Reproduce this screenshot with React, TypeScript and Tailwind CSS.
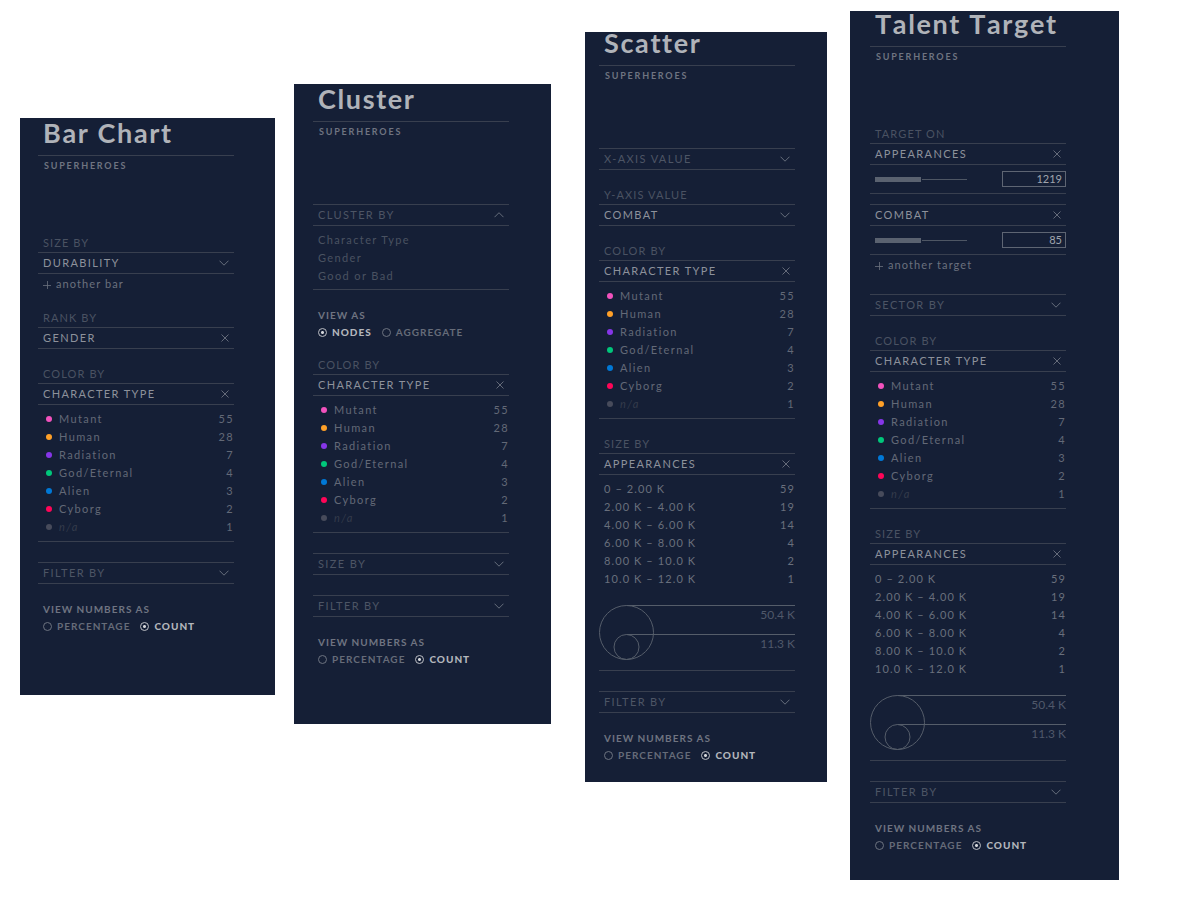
import { useId, useState, type ReactNode } from "react";

const characterTypes = [
  { name: "Mutant", count: 55, dot: "bg-[#f252bd]" },
  { name: "Human", count: 28, dot: "bg-[#ffa028]" },
  { name: "Radiation", count: 7, dot: "bg-[#8636e8]" },
  { name: "God/Eternal", count: 4, dot: "bg-[#00c77b]" },
  { name: "Alien", count: 3, dot: "bg-[#0078d6]" },
  { name: "Cyborg", count: 2, dot: "bg-[#ff0558]" },
  { name: "n/a", count: 1, dot: "bg-[#474b5b]" },
];

const appearanceRanges = [
  { name: "0 – 2.00 K", count: 59 },
  { name: "2.00 K – 4.00 K", count: 19 },
  { name: "4.00 K – 6.00 K", count: 14 },
  { name: "6.00 K – 8.00 K", count: 4 },
  { name: "8.00 K – 10.0 K", count: 2 },
  { name: "10.0 K – 12.0 K", count: 1 },
];

function Chevron({ up = false }: { up?: boolean }) {
  return (
    <svg
      className="pointer-events-none h-[6px] w-[10px] text-[#7b818e]"
      viewBox="0 0 10 6"
      fill="none"
      stroke="currentColor"
      strokeWidth="0.8"
      aria-hidden="true"
    >
      <path d={up ? "M0.5 5.2 5 0.7 9.5 5.2" : "M0.5 0.7 5 5.2 9.5 0.7"} />
    </svg>
  );
}

function Cross() {
  return (
    <svg
      className="size-2 text-[#868b97]"
      viewBox="0 0 8 8"
      fill="none"
      stroke="currentColor"
      strokeWidth="0.7"
      aria-hidden="true"
    >
      <path d="M0.5 0.5 7.5 7.5M7.5 0.5 0.5 7.5" />
    </svg>
  );
}

function Label({ children, htmlFor }: { children: ReactNode; htmlFor?: string }) {
  const style = "block pb-1 pl-[5px] text-[11px] leading-[10px] tracking-widest text-[#4a5262]";
  return htmlFor ? (
    <label htmlFor={htmlFor} className={style}>
      {children}
    </label>
  ) : (
    <h2 className={style}>{children}</h2>
  );
}

function Dropdown({ label, value }: { label: string; value?: string }) {
  const id = useId();
  return (
    <section className="mt-5">
      {value && <Label htmlFor={id}>{label}</Label>}
      <div className="grid h-[22px] items-center border-y border-[#383f4f]">
        <select
          id={id}
          aria-label={value ? undefined : label}
          className={
            value
              ? "col-start-1 row-start-1 h-5 w-full appearance-none bg-transparent pl-[5px] text-[11px] leading-5 tracking-[0.125em] text-[#8d919b] outline-none"
              : "col-start-1 row-start-1 h-5 w-full appearance-none bg-transparent pl-[5px] text-[11px] leading-5 tracking-[0.125em] text-[#4d5565] outline-none"
          }
        >
          <option>{value ?? label}</option>
        </select>
        <span className="pointer-events-none col-start-1 row-start-1 justify-self-end pr-[5px]">
          <Chevron />
        </span>
      </div>
    </section>
  );
}

function Chosen({ name }: { name: string }) {
  return (
    <div className="flex h-[22px] items-center justify-between border-y border-[#383f4f] px-[5px]">
      <span className="text-[11px] leading-5 tracking-[0.125em] text-[#8d919b]">{name}</span>
      <button type="button" aria-label={`Remove ${name}`}>
        <Cross />
      </button>
    </div>
  );
}

function AddButton({ children }: { children: string }) {
  return (
    <button
      type="button"
      className="flex h-[19px] items-center gap-[5px] pt-0.5 pl-[5px] text-[11px] tracking-widest text-[#6b717e]"
    >
      <svg
        className="size-2"
        viewBox="0 0 8 8"
        stroke="currentColor"
        strokeWidth="0.8"
        aria-hidden="true"
      >
        <path d="M0 4.5H8M4.5 0V8" />
      </svg>
      {children}
    </button>
  );
}

function ColorBy() {
  return (
    <section className="mt-5">
      <Label>COLOR BY</Label>
      <Chosen name="CHARACTER TYPE" />
      <ul className="border-b border-[#383f4f] py-[5px] text-[11px] tracking-[0.125em]">
        {characterTypes.map((t) => (
          <li key={t.name} className="flex h-[18px] items-center pl-2 text-[#636977]">
            <span className={`mr-[7px] size-1.5 rounded-full ${t.dot}`} />
            <span className={t.name === "n/a" ? "text-[#343b4b] italic" : ""}>{t.name}</span>
            <span className="ml-auto">{t.count}</span>
          </li>
        ))}
      </ul>
    </section>
  );
}

function SizeBy() {
  return (
    <section className="mt-5">
      <Label>SIZE BY</Label>
      <Chosen name="APPEARANCES" />
      <ul className="pt-[5px] text-[11px] tracking-widest text-[#696f7c]">
        {appearanceRanges.map((r) => (
          <li key={r.name} className="flex h-[18px] items-center justify-between pl-[5px]">
            <span>{r.name}</span>
            <span>{r.count}</span>
          </li>
        ))}
      </ul>
      <div className="mt-[17px] flex border-b border-[#383f4f] pb-[9px]">
        <svg
          className="h-14 w-14 text-[#555d6a]"
          viewBox="0 0 56 56"
          fill="none"
          stroke="currentColor"
          aria-hidden="true"
        >
          <circle cx="27.5" cy="27.5" r="27" />
          <circle cx="27.5" cy="42" r="12.5" />
          <path d="M27.5 0.5H56M27.5 29.5H56" />
        </svg>
        <div className="flex-1 text-right text-xs leading-[18px] text-[#50586a]">
          <p className="h-[29px] border-t border-[#555d6a]">50.4 K</p>
          <p className="border-t border-[#555d6a]">11.3 K</p>
        </div>
      </div>
    </section>
  );
}

function ClusterBy() {
  return (
    <section className="mt-5">
      <button
        type="button"
        aria-expanded="true"
        className="flex h-[22px] w-full items-center justify-between border-y border-[#383f4f] px-[5px] text-[11px] leading-5 tracking-[0.125em] text-[#4d5565]"
      >
        CLUSTER BY
        <Chevron up />
      </button>
      <ul className="border-b border-[#383f4f] pt-[5px] pb-1 pl-[5px]">
        {["Character Type", "Gender", "Good or Bad"].map((o) => (
          <li key={o} className="flex h-[18px] items-center">
            <button type="button" className="text-[11px] tracking-[0.125em] text-[#4a5261]">
              {o}
            </button>
          </li>
        ))}
      </ul>
    </section>
  );
}

function RadioGroup({ title, options, initial }: { title: string; options: string[]; initial: string }) {
  const [value, setValue] = useState(initial);
  const name = useId();
  return (
    <fieldset className="mt-5">
      <legend className="pl-[5px] text-[10px] leading-[10px] font-bold tracking-widest text-[#6f7481]">
        {title}
      </legend>
      <div className="mt-1 flex h-4 items-center gap-2.5 pl-[5px]">
        {options.map((o) => (
          <label
            key={o}
            className="flex items-center gap-[5px] text-[10px] leading-3 font-bold tracking-widest text-[#666c79] has-checked:font-black has-checked:text-[#b3b6bc]"
          >
            <input
              type="radio"
              name={name}
              checked={value === o}
              onChange={() => setValue(o)}
              className="size-[9px] appearance-none rounded-full border border-[#6d7380] checked:border-[#bbbdc3] checked:bg-[radial-gradient(circle,#d4d6da_1px,transparent_2px)]"
            />
            {o}
          </label>
        ))}
      </div>
    </fieldset>
  );
}

function Target({ name, initial }: { name: string; initial: string }) {
  const [level, setLevel] = useState(50);
  const [amount, setAmount] = useState(initial);
  return (
    <div>
      <Chosen name={name} />
      <div className="flex items-center justify-between border-b border-[#383f4f] py-1.5 pl-[5px]">
        <input
          type="range"
          aria-label={`${name} level`}
          value={level}
          onChange={(e) => setLevel(Number(e.target.value))}
          style={{ backgroundSize: `${level}% 100%, 100% 1px` }}
          className="h-[5px] w-[92px] appearance-none bg-transparent bg-[linear-gradient(#5a6270,#5a6270),linear-gradient(#4e5664,#4e5664)] bg-left bg-no-repeat [&::-webkit-slider-thumb]:h-[5px] [&::-webkit-slider-thumb]:w-px [&::-webkit-slider-thumb]:appearance-none [&::-webkit-slider-thumb]:bg-[#151f36]"
        />
        <input
          type="text"
          aria-label={`${name} amount`}
          value={amount}
          onChange={(e) => setAmount(e.target.value)}
          className="h-4 w-16 border border-[#5e6573] bg-transparent pr-[3px] pb-px text-right text-[11px] leading-3 text-[#a0a4ac] outline-none"
        />
      </div>
    </div>
  );
}

function Panel({
  title,
  panelClass,
  titleClass = "",
  children,
}: {
  title: string;
  panelClass: string;
  titleClass?: string;
  children: ReactNode;
}) {
  return (
    <article className={`flow-root min-w-60 grow basis-0 bg-[#151f36] ${panelClass}`}>
      <header>
        <h1
          className={`border-b border-[#383f4f] pb-[7px] pl-[5px] text-[27px] leading-[30px] font-bold tracking-[0.06em] whitespace-nowrap text-[#b0b3b9] [font-kerning:none] ${titleClass}`}
        >
          {title}
        </h1>
        <p className="pt-1 pb-[46px] pl-1.5 text-[9px] leading-3 font-bold tracking-[0.2em] text-[#6f7481]">
          SUPERHEROES
        </p>
      </header>
      {children}
    </article>
  );
}

export default function App() {
  const viewNumbers = (
    <RadioGroup title="VIEW NUMBERS AS" options={["PERCENTAGE", "COUNT"]} initial="COUNT" />
  );

  return (
    <main className="flex min-h-screen flex-wrap items-start bg-white pr-[65px] pl-5 font-['Lato',sans-serif]">
      <Panel title="Bar Chart" panelClass="mt-[118px] pr-[41px] pb-[61px] pl-[18px]">
        <Dropdown label="SIZE BY" value="DURABILITY" />
        <AddButton>another bar</AddButton>
        <section className="mt-5">
          <Label>RANK BY</Label>
          <Chosen name="GENDER" />
        </section>
        <ColorBy />
        <Dropdown label="FILTER BY" />
        {viewNumbers}
      </Panel>

      <Panel title="Cluster" panelClass="mt-[84px] ml-[19px] pr-[42px] pb-[57px] pl-[19px]">
        <ClusterBy />
        <RadioGroup title="VIEW AS" options={["NODES", "AGGREGATE"]} initial="NODES" />
        <ColorBy />
        <Dropdown label="SIZE BY" />
        <Dropdown label="FILTER BY" />
        {viewNumbers}
      </Panel>

      <Panel title="Scatter" panelClass="mt-8 ml-[34px] pr-8 pb-[19px] pl-3.5" titleClass="-mt-1">
        <Dropdown label="X-AXIS VALUE" />
        <Dropdown label="Y-AXIS VALUE" value="COMBAT" />
        <ColorBy />
        <SizeBy />
        <Dropdown label="FILTER BY" />
        {viewNumbers}
      </Panel>

      <Panel title="Talent Target" panelClass="mt-[11px] ml-[23px] pr-[53px] pb-[27px] pl-5" titleClass="-mt-0.5">
        <section className="mt-5">
          <Label>TARGET ON</Label>
          <div className="flex flex-col gap-2.5">
            <Target name="APPEARANCES" initial="1219" />
            <Target name="COMBAT" initial="85" />
          </div>
          <AddButton>another target</AddButton>
        </section>
        <Dropdown label="SECTOR BY" />
        <ColorBy />
        <SizeBy />
        <Dropdown label="FILTER BY" />
        {viewNumbers}
      </Panel>
    </main>
  );
}
